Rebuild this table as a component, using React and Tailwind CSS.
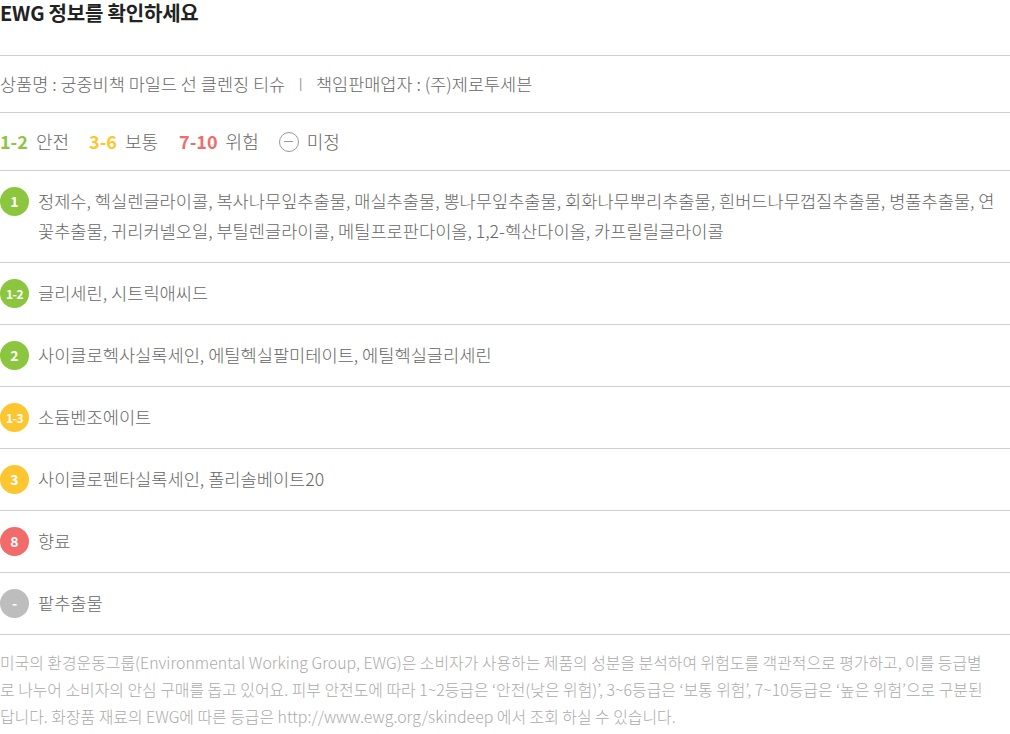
const ROWS = [
  {
    grade: '1',
    color: 'bg-[#8cc63f]',
    text: '정제수, 헥실렌글라이콜, 복사나무잎추출물, 매실추출물, 뽕나무잎추출물, 회화나무뿌리추출물, 흰버드나무껍질추출물, 병풀추출물, 연꽃추출물, 귀리커넬오일, 부틸렌글라이콜, 메틸프로판다이올, 1,2-헥산다이올, 카프릴릴글라이콜',
  },
  { grade: '1-2', color: 'bg-[#8cc63f]', small: true, text: '글리세린, 시트릭애씨드' },
  { grade: '2', color: 'bg-[#8cc63f]', text: '사이클로헥사실록세인, 에틸헥실팔미테이트, 에틸헥실글리세린' },
  { grade: '1-3', color: 'bg-[#fcc630]', small: true, text: '소듐벤조에이트' },
  { grade: '3', color: 'bg-[#fcc630]', text: '사이클로펜타실록세인, 폴리솔베이트20' },
  { grade: '8', color: 'bg-[#f26b6b]', text: '향료' },
  { grade: '-', color: 'bg-[#bdbdbd]', text: '팥추출물' },
];

export default function App() {
  return (
    <div className="w-[1010px] bg-white font-['Noto_Sans_CJK_KR','Noto_Sans',sans-serif] text-[#666]">
      {/* Title */}
      <div className="h-[56px] border-b border-[#cfcfcf]">
        <h2 className="text-[20px] font-bold leading-[26px] text-[#222] tracking-[-0.2px]">EWG 정보를 확인하세요</h2>
      </div>

      {/* Product */}
      <div className="h-[57px] flex items-center border-b border-[#cfcfcf] text-[17.5px] font-light">
        <span>상품명 : 궁중비책 마일드 선 클렌징 티슈</span>
        <span className="mx-[13px] text-[#999]">I</span>
        <span>책임판매업자 : (주)제로투세븐</span>
      </div>

      {/* Legend */}
      <div className="h-[58px] flex items-center border-b border-[#cfcfcf] text-[18px] font-light">
        <span className="font-bold text-[#8cc63f]">1-2</span>
        <span className="ml-[8px]">안전</span>
        <span className="ml-[20px] font-bold text-[#fcc630]">3-6</span>
        <span className="ml-[8px]">보통</span>
        <span className="ml-[21px] font-bold text-[#f26b6b]">7-10</span>
        <span className="ml-[8px]">위험</span>
        <span className="ml-[20px] w-[20px] h-[20px] rounded-full border-[1.5px] border-[#999] flex items-center justify-center">
          <span className="w-[9px] h-[1.5px] bg-[#999]" />
        </span>
        <span className="ml-[8px]">미정</span>
      </div>

      {/* Ingredients */}
      {ROWS.map((r) => (
        <div key={r.grade} className="flex gap-[9px] py-[16px] border-b border-[#cfcfcf]">
          <div
            className={`${r.color} shrink-0 w-[29px] h-[29px] rounded-full flex items-center justify-center text-white font-bold ${r.small ? 'text-[12px] tracking-[-0.5px]' : 'text-[14px]'}`}
          >
            {r.grade}
          </div>
          <p className="text-[17.6px] font-light leading-[30px] -mt-[1px]">{r.text}</p>
        </div>
      ))}

      {/* Footnote */}
      <p className="pt-[14px] text-[15.9px] font-light leading-[27px] text-[#aaa] whitespace-nowrap">
        미국의 환경운동그룹(Environmental Working Group, EWG)은 소비자가 사용하는 제품의 성분을 분석하여 위험도를 객관적으로 평가하고, 이를 등급별
        <br />
        로 나누어 소비자의 안심 구매를 돕고 있어요. 피부 안전도에 따라 1~2등급은 ‘안전(낮은 위험)’, 3~6등급은 ‘보통 위험’, 7~10등급은 ‘높은 위험’으로 구분된
        <br />
        답니다. 화장품 재료의 EWG에 따른 등급은 http://www.ewg.org/skindeep 에서 조회 하실 수 있습니다.
      </p>
    </div>
  );
}
